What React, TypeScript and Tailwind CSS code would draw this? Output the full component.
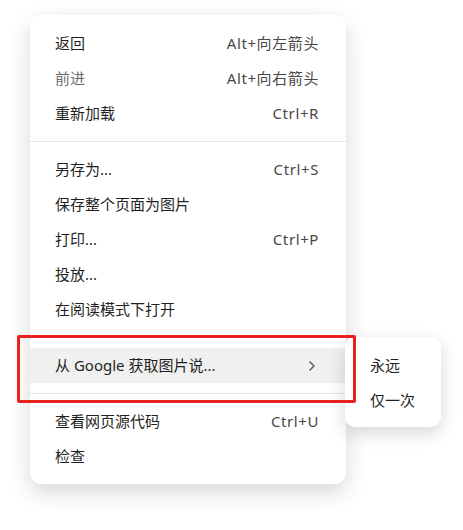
import type { ReactNode } from 'react';

type ItemProps = {
  readonly label: string;
  readonly shortcut?: string;
  readonly dim?: boolean;
  readonly active?: boolean;
  readonly children?: ReactNode;
};

const Item = ({ label, shortcut, dim, active, children }: ItemProps) => (
  <div
    className={`flex h-[35px] items-center justify-between pl-[25px] pr-[27px] ${
      active ? 'bg-[#f0f0f0]' : ''
    }`}
  >
    <span className={dim ? 'text-[#6b6b6b]' : 'text-[#1f1f1f]'}>{label}</span>
    {shortcut && (
      <span className="tracking-[0.6px] text-[#474747]">{shortcut}</span>
    )}
    {children}
  </div>
);

const Separator = () => <div className="my-[10px] h-px bg-[#dde4ec]" />;

const Chevron = () => (
  <svg width="8" height="12" viewBox="0 0 8 12" className="mr-[3px]">
    <polyline
      points="2,2 6,6 2,10"
      fill="none"
      stroke="#5f6368"
      strokeWidth="1.6"
      strokeLinecap="round"
      strokeLinejoin="round"
    />
  </svg>
);

const App = () => (
  <div
    className="relative h-[530px] w-[463px] overflow-hidden bg-white text-[15px]"
    style={{ fontFamily: '"Noto Sans", "Noto Sans CJK SC", sans-serif' }}
  >
    <div className="ml-[30px] mt-[15px] w-[316px] rounded-[11px] bg-white pb-[10px] pt-[11px] shadow-[0_8px_22px_rgba(0,0,0,0.16)]">
      <Item label="返回" shortcut="Alt+向左箭头" />
      <Item label="前进" shortcut="Alt+向右箭头" dim />
      <Item label="重新加载" shortcut="Ctrl+R" />
      <Separator />
      <Item label="另存为..." shortcut="Ctrl+S" />
      <Item label="保存整个页面为图片" />
      <Item label="打印..." shortcut="Ctrl+P" />
      <Item label="投放..." />
      <Item label="在阅读模式下打开" />
      <Separator />
      <Item label="从 Google 获取图片说..." active>
        <Chevron />
      </Item>
      <Separator />
      <Item label="查看网页源代码" shortcut="Ctrl+U" />
      <Item label="检查" />
    </div>

    <div className="absolute left-[345px] top-[337px] w-[96px] rounded-[10px] bg-white pb-[9px] pt-[11px] shadow-[0_6px_18px_rgba(0,0,0,0.16)]">
      <div className="flex h-[35px] items-center pl-[25px] text-[#1f1f1f]">永远</div>
      <div className="flex h-[35px] items-center pl-[25px] text-[#1f1f1f]">仅一次</div>
    </div>

    <div className="absolute left-[17px] top-[335px] h-[68px] w-[339px] rounded-[2px] border-[3px] border-[#e8211c]" />
  </div>
);

export default App;
